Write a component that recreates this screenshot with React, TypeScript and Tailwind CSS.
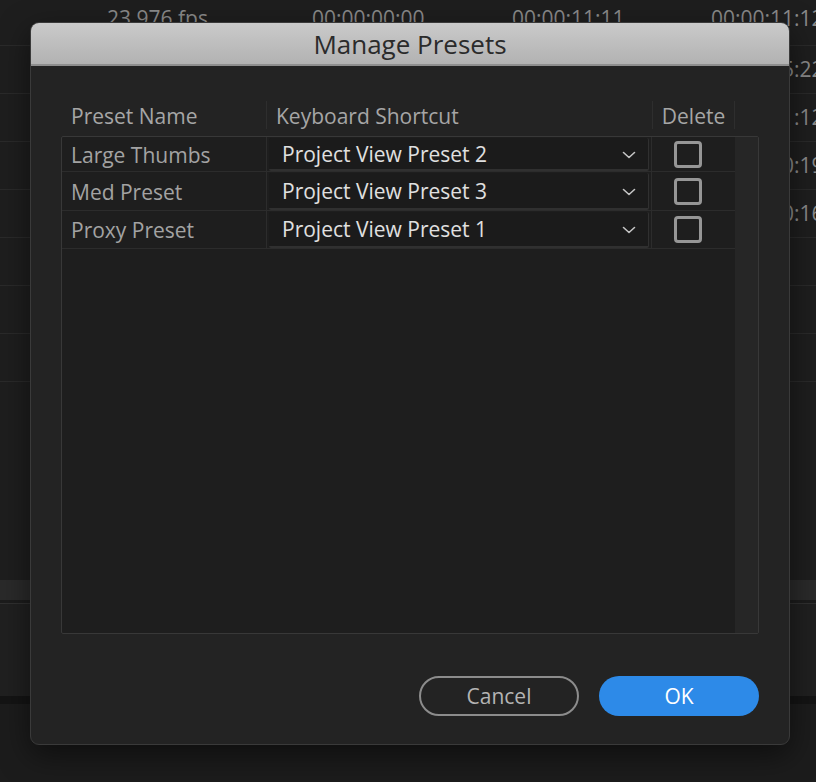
import React from "react";

const bgRows = [
  ["23.976 fps", "00:00:00:00", "00:00:11:11", "00:00:11:12"],
  ["", "", "", "00:00:05:22"],
  ["", "", "", "00:00:11:12"],
  ["", "", "", "00:00:10:19"],
  ["", "", "", "00:00:10:16"],
  ["", "", "", ""],
  ["", "", "", ""],
  ["", "", "", ""],
];

const presets = [
  { name: "Large Thumbs", shortcut: "Project View Preset 2", h: "h-[35px]" },
  { name: "Med Preset", shortcut: "Project View Preset 3", h: "h-[39px]" },
  { name: "Proxy Preset", shortcut: "Project View Preset 1", h: "h-[38px]" },
];

function Chevron() {
  return (
    <svg width="14" height="8" viewBox="0 0 14 8" className="shrink-0">
      <path d="M1.5 1.5 L7 6.5 L12.5 1.5" fill="none" stroke="#c4c4c4" strokeWidth="1.6" strokeLinecap="round" strokeLinejoin="round" />
    </svg>
  );
}

export default function App() {
  return (
    <div
      className="relative w-[816px] h-[782px] overflow-hidden bg-[#1c1c1c]"
      style={{ fontFamily: '"Open Sans", "Noto Sans", sans-serif' }}
    >
      {/* background panel */}
      <div className="flex flex-col">
        {bgRows.map((r, i) => (
          <div
            key={i}
            className={`flex items-center border-b border-[#2a2a2a] bg-[#1e1e1e] text-[21px] text-[#8a8a8a] whitespace-nowrap ${
              i === 0 ? "h-[46px] pb-[8px]" : "h-[48px]"
            }`}
          >
            <div className="w-[107px] shrink-0" />
            <div className="w-[205px] shrink-0">{r[0]}</div>
            <div className="w-[200px] shrink-0">{r[1]}</div>
            <div className="w-[199px] shrink-0">{r[2]}</div>
            <div className="shrink-0">{r[3]}</div>
          </div>
        ))}
        <div className="h-[198px] bg-[#1e1e1e]" />
        <div className="h-[20px] bg-[#2a2a2a]" />
        <div className="h-[3px] bg-[#1c1c1c]" />
        <div className="h-[93px] border-t border-[#303030] bg-[#202020]" />
        <div className="h-[8px] bg-[#141414]" />
        <div className="flex-1 bg-[#1d1d1d]" />
      </div>

      {/* dialog */}
      <div className="absolute left-[30px] top-[22px] w-[760px] h-[723px] rounded-[9px] border border-[#3a3a3a] bg-[#232323] shadow-[0_10px_30px_rgba(0,0,0,0.5)] overflow-hidden flex flex-col">
        <div className="h-[43px] shrink-0 flex items-center justify-center bg-gradient-to-b from-[#cacaca] to-[#b2b2b2] border-b-2 border-[#8e8e8e] text-[26px] text-[#2b2b2b] pt-[2px]">
          Manage Presets
        </div>

        <div className="flex flex-col px-[30px] pt-[35px]">
          {/* header */}
          <div className="flex h-[28px] items-center text-[21px] text-[#a6a6a6]">
            <div className="w-[206px] pl-[10px] pt-[3px] h-full flex items-center border-r border-[#2e2e2e]">Preset Name</div>
            <div className="w-[386px] pl-[9px] pt-[3px] h-full flex items-center border-r border-[#2e2e2e]">Keyboard Shortcut</div>
            <div className="w-[82px] pt-[3px] h-full flex items-center justify-center border-r border-[#2e2e2e]">Delete</div>
          </div>

          {/* table */}
          <div className="mt-[7px] h-[498px] flex border border-[#383838] rounded-[2px] bg-[#1e1e1e]">
            <div className="flex-1 flex flex-col">
              {presets.map((p) => (
                <div key={p.name} className={`flex ${p.h} border-b border-[#2c2c2c] text-[21px]`}>
                  <div className="w-[205px] shrink-0 pl-[9px] pt-[3px] flex items-center text-[#a3a3a3] border-r border-[#2c2c2c]">
                    {p.name}
                  </div>
                  <div className="w-[384px] shrink-0 pl-[2px] pr-[2px] pt-[1px] flex">
                    <div className="flex-1 flex items-center justify-between pl-[13px] pr-[12px] pt-[2px] bg-[#1b1b1b] border-b-2 border-r border-[#303030] rounded-[2px] text-[#e0e0e0]">
                      <span>{p.shortcut}</span>
                      <Chevron />
                    </div>
                  </div>
                  <div className="flex-1 flex items-center justify-center pr-[12px] border-l border-[#2c2c2c]">
                    <div className="w-[28px] h-[27px] rounded-[4px] border-[3px] border-[#969696]" />
                  </div>
                </div>
              ))}
            </div>
            <div className="w-[23px] shrink-0 bg-[#262626]" />
          </div>

          {/* buttons */}
          <div className="mt-[42px] flex justify-end gap-[20px]">
            <button className="w-[160px] h-[40px] pt-[2px] rounded-full border-2 border-[#8c8c8c] text-[21px] text-[#b4b4b4] flex items-center justify-center">
              Cancel
            </button>
            <button className="w-[160px] h-[40px] pt-[2px] rounded-full bg-[#2d8ae8] text-[21px] text-white flex items-center justify-center">
              OK
            </button>
          </div>
        </div>
      </div>
    </div>
  );
}
